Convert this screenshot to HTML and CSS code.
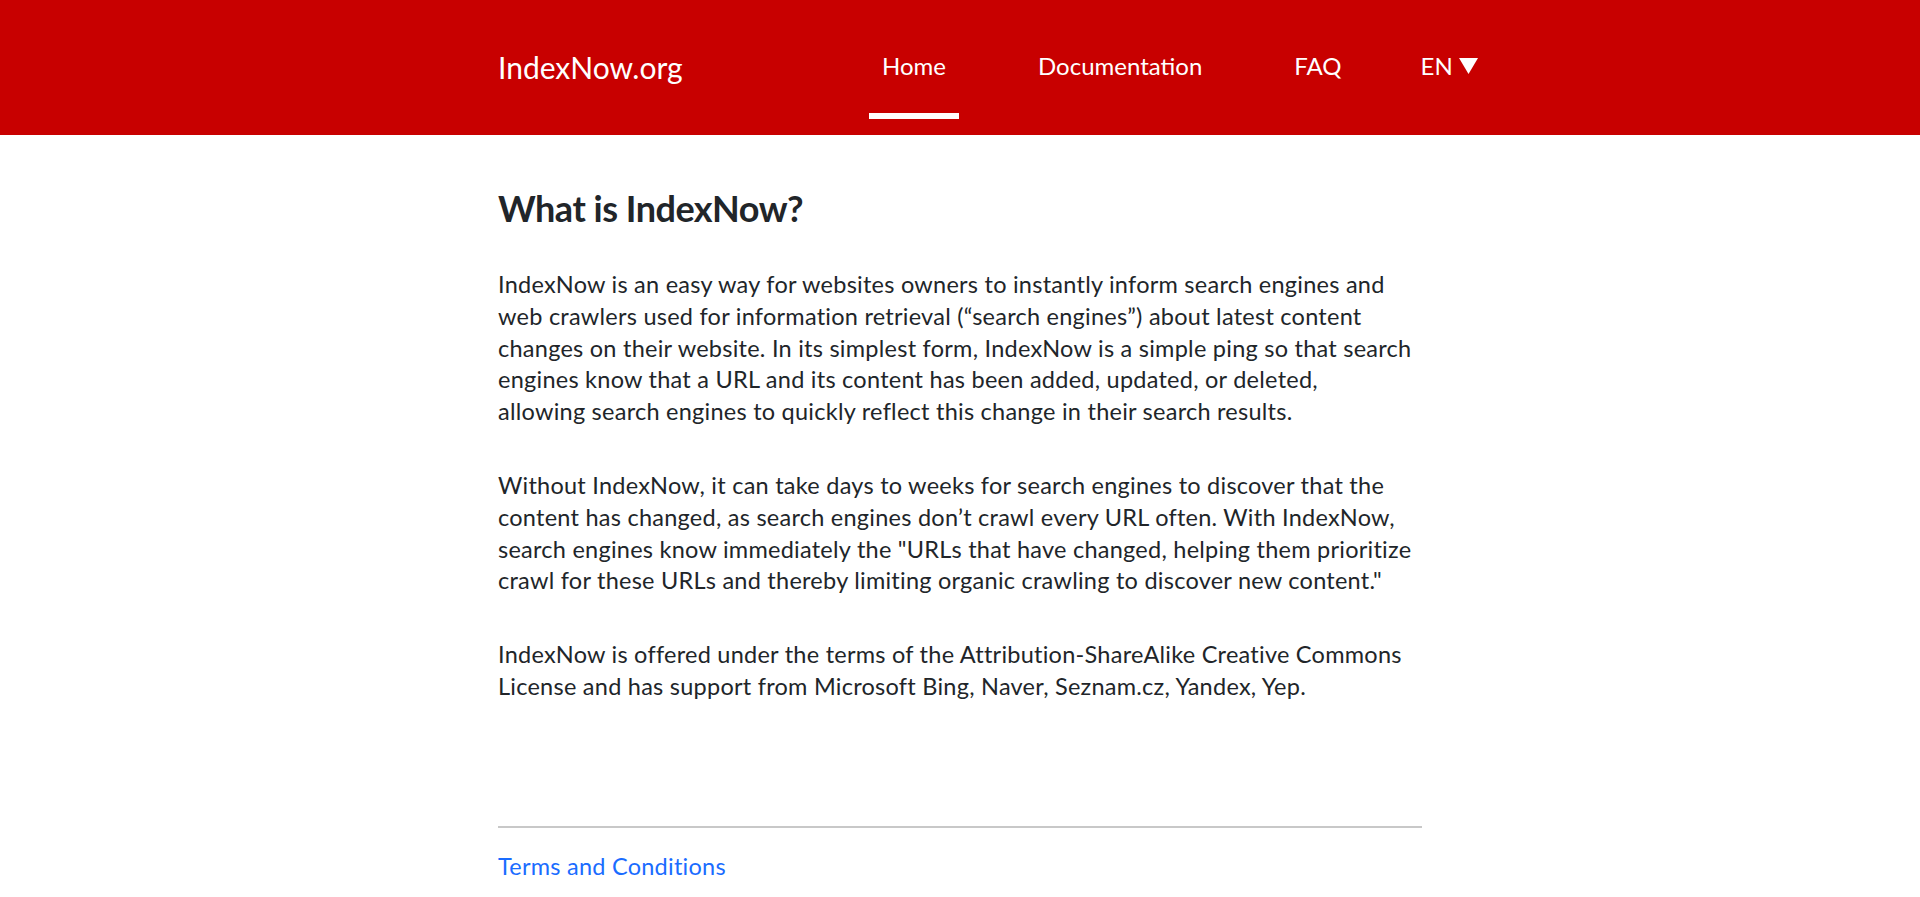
FILE: index.html
```html
<!DOCTYPE html>
<html lang="en">
<head>
<meta charset="utf-8">
<title>IndexNow.org</title>
<link rel="stylesheet" href="styles.css">
</head>
<body>
<header class="topbar">
  <div class="topbar-inner">
    <a class="brand" href="#">IndexNow.org</a>
    <nav class="nav">
      <a class="nav-item active" href="#">Home</a>
      <a class="nav-item" href="#">Documentation</a>
      <a class="nav-item" href="#">FAQ</a>
      <a class="nav-item lang" href="#">EN<svg class="caret" width="19" height="16" viewBox="0 0 19 16" aria-hidden="true"><polygon points="0,0 19,0 9.5,16" fill="#fff"/></svg></a>
    </nav>
  </div>
</header>
<main class="content">
  <h1 class="title">What is IndexNow?</h1>
  <p class="para">IndexNow is an easy way for websites owners to instantly inform search engines and<br>web crawlers used for information retrieval (“search engines”) about latest content<br>changes on their website. In its simplest form, IndexNow is a simple ping so that search<br>engines know that a URL and its content has been added, updated, or deleted,<br>allowing search engines to quickly reflect this change in their search results.</p>
  <p class="para">Without IndexNow, it can take days to weeks for search engines to discover that the<br>content has changed, as search engines don’t crawl every URL often. With IndexNow,<br>search engines know immediately the "URLs that have changed, helping them prioritize<br>crawl for these URLs and thereby limiting organic crawling to discover new content."</p>
  <p class="para">IndexNow is offered under the terms of the Attribution-ShareAlike Creative Commons<br>License and has support from Microsoft Bing, Naver, Seznam.cz, Yandex, Yep.</p>
</main>
<footer class="footer">
  <hr class="rule">
  <a class="footer-link" href="#">Terms and Conditions</a>
</footer>
</body>
</html>
```
FILE: styles.css
```css
html, body {
  margin: 0;
  padding: 0;
  background: #ffffff;
}
body {
  font-family: Lato, "Liberation Sans", sans-serif;
  color: #212529;
}
a { text-decoration: none; }

.topbar {
  background: #c80000;
  height: 135px;
}
.topbar-inner {
  width: 924px;
  margin: 0 auto;
  display: flex;
  align-items: flex-start;
  height: 135px;
}
.brand {
  flex: 0 0 371px;
  color: #fff;
  font-size: 30px;
  line-height: 36px;
  padding-top: 49px;
  white-space: nowrap;
}
.nav {
  display: flex;
  flex: 0 0 auto;
  gap: 66px;
  padding-top: 51px;
  white-space: nowrap;
}
.nav-item {
  color: #fff;
  font-size: 24px;
  line-height: 30px;
  padding: 0 13px;
  height: 68px;
  box-sizing: border-box;
  border-bottom: 6px solid transparent;
}
.nav-item.active {
  border-bottom-color: #fff;
}
.nav-item.lang {
  margin-left: -13px;
  display: flex;
  align-items: flex-start;
}
.caret {
  margin: 7px 0 0 6px;
}

.content {
  width: 924px;
  margin: 0 auto;
  padding-top: 51px;
}
.title {
  font-size: 36px;
  font-weight: 700;
  letter-spacing: -0.5px;
  line-height: 44px;
  margin: 0 0 39px;
}
.para {
  font-size: 23.5px;
  letter-spacing: 0.25px;
  line-height: 31.8px;
  margin: 0 0 42px;
  white-space: nowrap;
}
.para:last-child {
  margin-bottom: 0;
}

.footer {
  width: 924px;
  margin: 0 auto;
  padding-top: 123px;
}
.rule {
  border: 0;
  border-top: 2px solid #c8c8c8;
  margin: 0;
}
.footer-link {
  display: inline-block;
  margin-top: 23px;
  color: #1a6cff;
  font-size: 23.5px;
  letter-spacing: 0.25px;
  line-height: 30px;
}
```
